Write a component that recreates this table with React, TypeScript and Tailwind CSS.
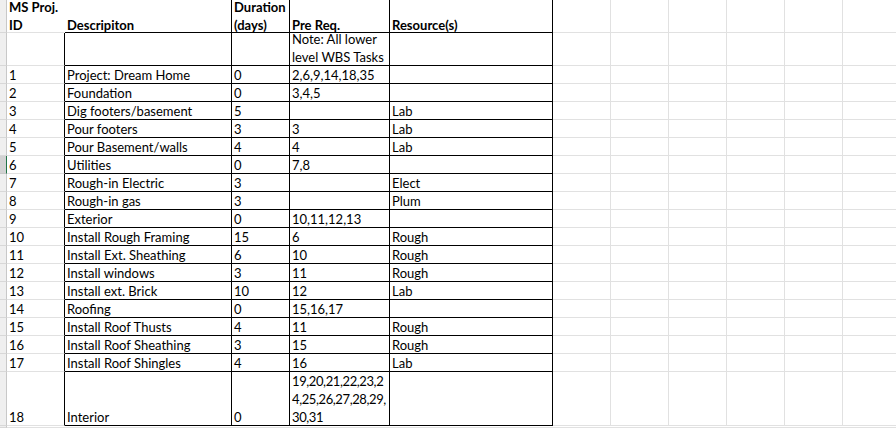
import React from "react";

type Row = { id: string; desc: string; dur: string; pre: string; res: string };

const rows: Row[] = [
  { id: "1", desc: "Project: Dream Home", dur: "0", pre: "2,6,9,14,18,35", res: "" },
  { id: "2", desc: "Foundation", dur: "0", pre: "3,4,5", res: "" },
  { id: "3", desc: "Dig footers/basement", dur: "5", pre: "", res: "Lab" },
  { id: "4", desc: "Pour footers", dur: "3", pre: "3", res: "Lab" },
  { id: "5", desc: "Pour Basement/walls", dur: "4", pre: "4", res: "Lab" },
  { id: "6", desc: "Utilities", dur: "0", pre: "7,8", res: "" },
  { id: "7", desc: "Rough-in Electric", dur: "3", pre: "", res: "Elect" },
  { id: "8", desc: "Rough-in gas", dur: "3", pre: "", res: "Plum" },
  { id: "9", desc: "Exterior", dur: "0", pre: "10,11,12,13", res: "" },
  { id: "10", desc: "Install Rough Framing", dur: "15", pre: "6", res: "Rough" },
  { id: "11", desc: "Install Ext. Sheathing", dur: "6", pre: "10", res: "Rough" },
  { id: "12", desc: "Install windows", dur: "3", pre: "11", res: "Rough" },
  { id: "13", desc: "Install ext. Brick", dur: "10", pre: "12", res: "Lab" },
  { id: "14", desc: "Roofing", dur: "0", pre: "15,16,17", res: "" },
  { id: "15", desc: "Install Roof Thusts", dur: "4", pre: "11", res: "Rough" },
  { id: "16", desc: "Install Roof Sheathing", dur: "3", pre: "15", res: "Rough" },
  { id: "17", desc: "Install Roof Shingles", dur: "4", pre: "16", res: "Lab" },
];

const GRID = "border-r-[#e1e1e1] border-b-[#e1e1e1]";

const Cell: React.FC<{
  w: string;
  borders: string;
  header?: boolean;
  children?: React.ReactNode;
}> = ({ w, borders, header, children }) => (
  <div className={`${w} shrink-0 h-full border-r border-b ${borders} flex items-end pl-[2px] overflow-visible`}>
    <div className={`leading-[18px] whitespace-nowrap ${header ? "-mb-[2px]" : "-mb-px"}`}>{children}</div>
  </div>
);

const Strip: React.FC<{ active?: boolean }> = ({ active }) => (
  <div
    className={
      active
        ? "w-[7px] shrink-0 h-full bg-[#d2d2d2] border-r border-b border-r-[#217346] border-b-[#c8c8c8]"
        : "w-[7px] shrink-0 h-full bg-[#efefef] border-r border-b border-r-[#c8c8c8] border-b-[#d8d8d8]"
    }
  />
);

const Filler: React.FC = () => (
  <>
    {[0, 1, 2, 3, 4, 5].map((i) => (
      <Cell key={i} w="w-[58px]" borders={GRID} />
    ))}
  </>
);

const TableRow: React.FC<{
  h: string;
  cells: React.ReactNode[];
  header?: boolean;
  active?: boolean;
}> = ({ h, cells, header, active }) => (
  <div className={`flex ${h} ${header ? "font-bold" : ""}`}>
    <Strip active={active} />
    <Cell
      w="w-[58px]"
      header={header}
      borders={header ? "border-r-white border-b-[#e1e1e1]" : "border-r-black border-b-[#e1e1e1]"}
    >
      {cells[0]}
    </Cell>
    <Cell w="w-[167px]" header={header} borders="border-black">{cells[1]}</Cell>
    <Cell w="w-[58px]" header={header} borders="border-black">{cells[2]}</Cell>
    <Cell w="w-[100px]" header={header} borders="border-black">{cells[3]}</Cell>
    <Cell w="w-[163px]" header={header} borders="border-black">{cells[4]}</Cell>
    <Filler />
  </div>
);

export default function App() {
  return (
    <div className="w-[896px] h-[428px] overflow-hidden bg-white text-black text-[13px] font-[Lato,sans-serif]">
      <TableRow
        h="h-[33px]"
        header
        cells={[
          <>MS Proj.<br />ID</>,
          "Descripiton",
          <>Duration<br />(days)</>,
          "Pre Req.",
          "Resource(s)",
        ]}
      />
      <TableRow
        h="h-[33px]"
        cells={["", "", "", <>Note: All lower<br />level WBS Tasks</>, ""]}
      />
      {rows.map((r) => (
        <TableRow
          key={r.id}
          h="h-[18px]"
          active={r.id === "6"}
          cells={[r.id, r.desc, r.dur, r.pre, r.res]}
        />
      ))}
      <TableRow
        h="h-[54px]"
        cells={[
          "18",
          "Interior",
          "0",
          <span className="tracking-[-0.4px]">
            19,20,21,22,23,2<br />4,25,26,27,28,29,<br />30,31
          </span>,
          "",
        ]}
      />
      <div className="flex h-[2px]">
        <Strip />
        <div className="flex-1 border-b border-[#e1e1e1]" />
      </div>
    </div>
  );
}
